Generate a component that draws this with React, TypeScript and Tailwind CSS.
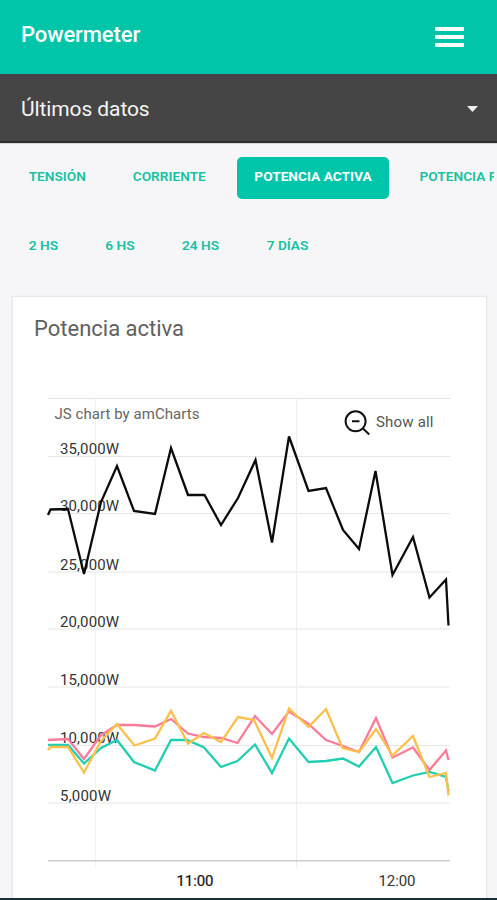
import clsx from 'clsx';

type Point = [number, number];

interface Series {
  name: string;
  color: string;
  points: Point[];
}

interface TabItem {
  label: string;
  className: string;
}

const metricTabs: TabItem[] = [
  { label: 'TENSIÓN', className: 'w-[88.5px]' },
  { label: 'CORRIENTE', className: 'w-[104.5px]' },
  { label: 'POTENCIA ACTIVA', className: 'w-[152px]' },
  { label: 'POTENCIA REACTIVA', className: 'w-[165px] pl-[15px] text-left' },
];

const rangeTabs: TabItem[] = [
  { label: '2 HS', className: 'w-[61px]' },
  { label: '6 HS', className: 'w-[61px]' },
  { label: '24 HS', className: 'w-[69px]' },
  { label: '7 DÍAS', className: 'w-[74px]' },
];

const series: Series[] = [
  {
    name: 'fase 1',
    color: '#f97b98',
    points: [
      [48, 740], [68, 739], [84, 759], [101, 735], [117, 725], [134, 725], [155, 726.5], [171, 719],
      [188, 733.5], [204, 737], [221, 738], [237.5, 743], [255, 716], [272, 734], [289, 711.5],
      [308, 723.5], [326, 740], [343, 746], [359, 752], [376, 718], [392.5, 757.5], [413, 747.5],
      [429.5, 770], [446, 750.5], [448.5, 760],
    ],
  },
  {
    name: 'fase 2',
    color: '#22ceb0',
    points: [
      [48, 745], [68, 745], [84, 763.5], [101, 748], [117, 740], [134, 762], [155, 770.5], [171, 740],
      [187, 740], [204, 747.5], [221, 767], [237.5, 761], [255, 744.5], [272, 773], [289, 738.5],
      [308.5, 762], [326, 761], [343, 758.5], [359, 766.5], [376, 747], [392.5, 783], [413, 775.5],
      [429.5, 772], [446, 777], [448.5, 791],
    ],
  },
  {
    name: 'fase 3',
    color: '#fbc04b',
    points: [
      [48, 750], [50.5, 747], [68, 747], [84, 772.5], [101, 741], [117, 724], [134.5, 745.5],
      [155, 738.5], [171, 711], [188, 743.5], [204, 733], [221, 742], [238, 717], [254, 720],
      [272, 758], [289, 708.5], [308.5, 727], [326, 709], [342.5, 748], [359, 752], [376, 729],
      [392.5, 755.5], [413, 736], [429.5, 777], [446, 773], [448.5, 795.5],
    ],
  },
  {
    name: 'total',
    color: '#0b0b0b',
    points: [
      [48, 515], [50.5, 509.5], [68, 509], [84, 574], [101, 502], [117, 466], [134, 511], [155, 514],
      [171, 448], [188, 495], [204.5, 495], [221, 525], [238, 498], [255.5, 460], [272, 542.5],
      [289, 436.5], [308.5, 491], [326, 488], [343, 530], [359, 549], [375.5, 471], [392.5, 575],
      [413, 537], [429.5, 597.5], [446, 579.5], [448.5, 625.5],
    ],
  },
];

const yTicks = [
  { y: 456.5, label: '35,000W' },
  { y: 513.5, label: '30,000W' },
  { y: 572, label: '25,000W' },
  { y: 629, label: '20,000W' },
  { y: 687, label: '15,000W' },
  { y: 745.5, label: '10,000W' },
  { y: 803, label: '5,000W' },
];

const toPath = (points: Point[]) => points.map((p) => p.join(',')).join(' ');

function TabRow({ items, active }: { items: TabItem[]; active?: string }) {
  return (
    <div className="mr-[3px] flex gap-[15.5px] overflow-hidden pl-[13px]">
      {items.map(({ label, className }) => (
        <button
          key={label}
          className={clsx(
            'h-[42px] shrink-0 rounded-[5px] pb-[3px] text-[13.7px] whitespace-nowrap',
            className,
            label === active ? 'bg-[#00c5a8] font-bold text-white' : 'font-semibold text-[#18c1a0]',
          )}
        >
          {label}
        </button>
      ))}
    </div>
  );
}

function PowerChart() {
  return (
    <svg viewBox="13 380 472 518" width="472" height="518" className="block">
      {/* Grid */}
      <line x1="48" x2="450" y1="398.5" y2="398.5" stroke="#e2e2e2" />
      {yTicks.map(({ y }) => (
        <line key={y} x1="48" x2="450" y1={y} y2={y} stroke="#e6e6e6" strokeWidth="1.2" />
      ))}
      <line x1="95.5" x2="95.5" y1="398" y2="868" stroke="#f3f3f3" />
      <line x1="296.5" x2="296.5" y1="398" y2="868" stroke="#eeeeee" />
      <line x1="48" x2="450" y1="860.7" y2="860.7" stroke="#cccccc" strokeWidth="1.6" />

      {/* Labels */}
      <g fontSize="15" fill="#333333">
        {yTicks.map(({ y, label }) => (
          <text key={label} x="60" y={y - 2.5} textLength={label.length === 7 ? 59 : 51}>
            {label}
          </text>
        ))}
        <text x="176.5" y="886" textLength="37" fill="#111111" stroke="#111111" strokeWidth="0.2">11:00</text>
        <text x="378.5" y="886" textLength="37">12:00</text>
      </g>

      {series.map(({ name, color, points }) => (
        <polyline
          key={name}
          points={toPath(points)}
          fill="none"
          stroke={color}
          strokeWidth="2.3"
          strokeLinejoin="miter"
        />
      ))}

      <text x="54.5" y="418.5" fontSize="15" fill="#666666" textLength="145">
        JS chart by amCharts
      </text>

      {/* Zoom out */}
      <g fill="none" stroke="#111111" strokeWidth="2">
        <circle cx="355.6" cy="421.3" r="10" />
        <path d="M352 421.3h7.5M362.7 428.2l6.5 6.3" />
      </g>
      <text x="376" y="427" fontSize="15" fill="#555555" textLength="57.5">
        Show all
      </text>
    </svg>
  );
}

export default function App() {
  return (
    <div className="flex h-[900px] w-[497px] flex-col overflow-hidden bg-[#f6f6f9] font-['Roboto',sans-serif]">
      <header className="flex h-[74px] shrink-0 items-center justify-between bg-[#00c5a8] pr-[33px] pl-[21px]">
        <span className="pb-1.5 text-[22px] font-medium tracking-[-0.1px] text-white">
          Powermeter
        </span>
        <button aria-label="Menu" className="flex w-[29px] flex-col gap-1 pb-px">
          <span className="h-1 rounded-[1px] bg-white" />
          <span className="h-1 rounded-[1px] bg-white" />
          <span className="h-1 rounded-[1px] bg-white" />
        </button>
      </header>

      <div className="flex h-[69px] shrink-0 items-center justify-between border-b-2 border-[#303030] bg-[#454545] pr-[19px] pl-[21px]">
        <span className="pt-1 text-[21px] tracking-[-0.1px] text-[#f4f4f4]">Últimos datos</span>
        <svg width="11" height="6" viewBox="0 0 11 6" className="mt-0.5">
          <path d="M0 0h11L5.5 6z" fill="#eeeeee" />
        </svg>
      </div>

      <nav className="flex shrink-0 flex-col gap-[27px] border-t border-[#d5d5d7] pt-[13px]">
        <TabRow items={metricTabs} active="POTENCIA ACTIVA" />
        <TabRow items={rangeTabs} />
      </nav>

      <main className="mx-3 mt-[28px] h-[602px] w-[475px] shrink-0 border border-b-0 border-[#e8e8eb] bg-white shadow-[0_0_2px_rgba(0,0,0,0.06)]">
        <h1 className="h-[83px] pt-[15px] pl-[21px] text-[22px] leading-[34px] text-[#606060]">
          Potencia activa
        </h1>
        <PowerChart />
      </main>
      <div className="h-[2px] shrink-0 bg-[#153239]" />
    </div>
  );
}
